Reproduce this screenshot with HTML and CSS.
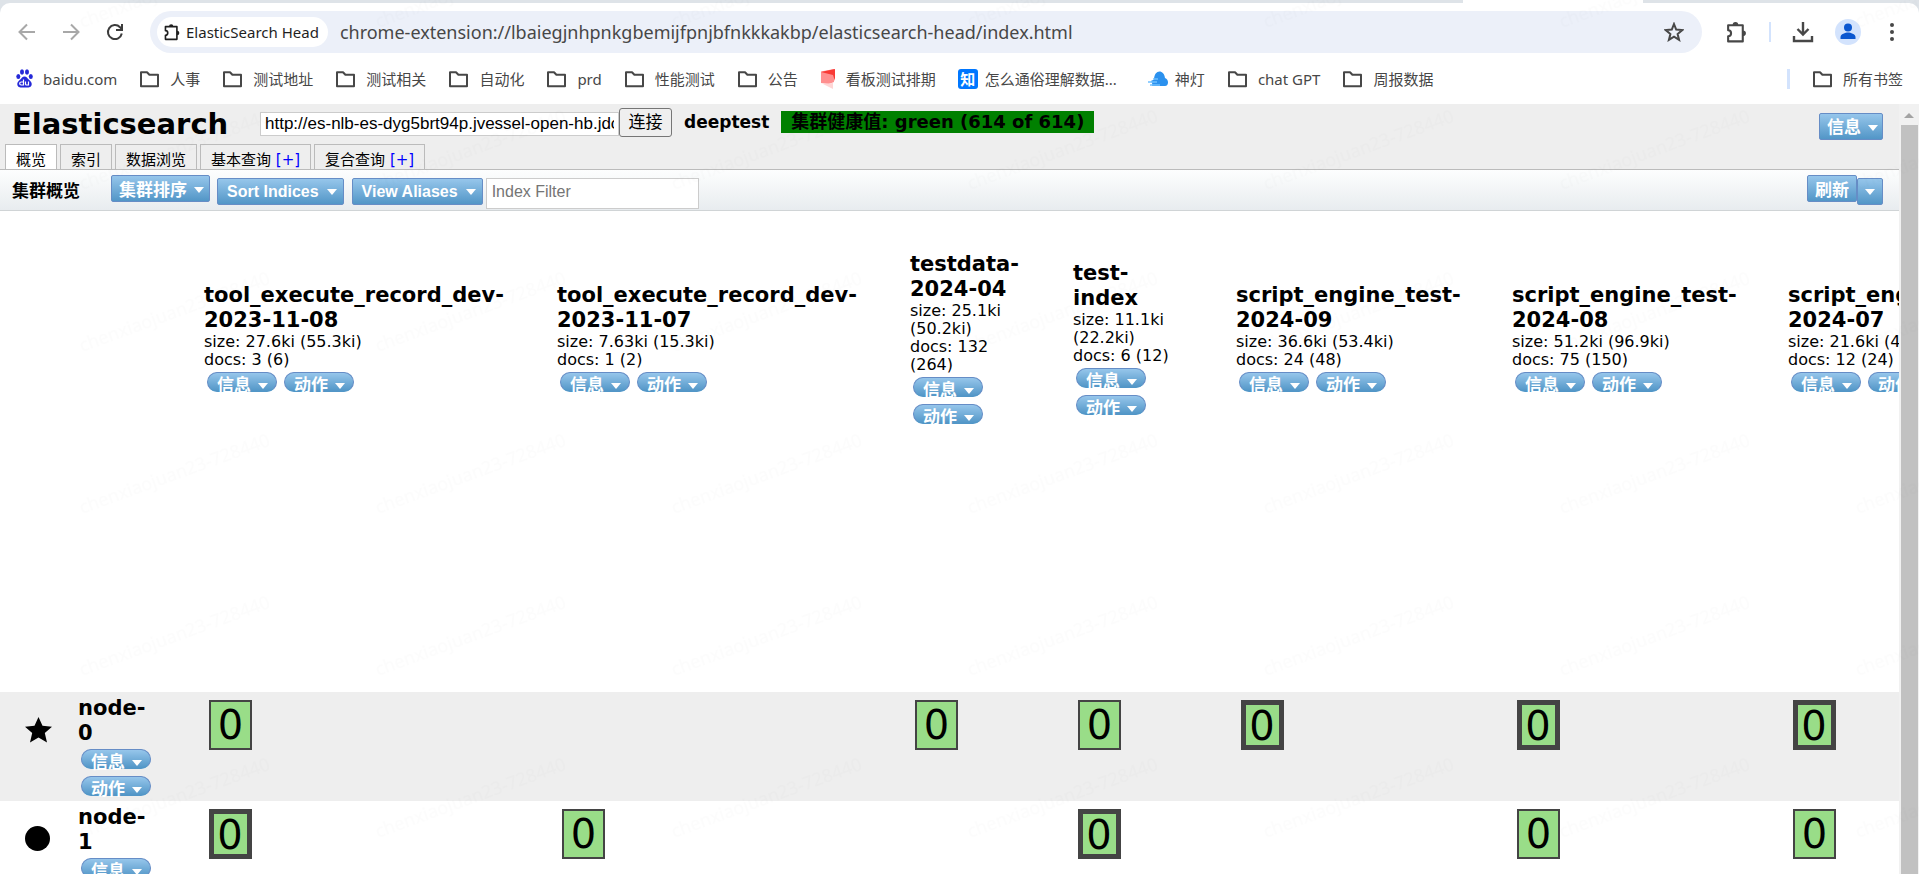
FILE: index.html
```html
<!DOCTYPE html>
<html lang="zh-CN">
<head>
    <meta charset="UTF-8">
    <meta name="viewport" content="width=device-width, initial-scale=1.0">
    <title>ElasticSearch Head</title>
    <link rel="stylesheet" href="styles.css">
</head>
<body>
    <svg class="defs" aria-hidden="true">
        <symbol id="folder" viewBox="0 0 21 18">
            <path d="M2 15.500V2.200h6l2.400 2.600H19v11.400H2z" fill="none" stroke="#474747" stroke-width="2" stroke-linejoin="round"/>
        </symbol>
        <symbol id="puzzle" viewBox="0 0 22 22">
            <path d="M3 4.500h14v15.500H3v-5a2.800 2.800 0 0 0 0-5.600z" fill="none" stroke="currentColor" stroke-width="2" stroke-linejoin="round"/>
            <path d="M7.300 4.500a2.700 3 0 0 1 5.400 0zM17 9.500a3 2.700 0 0 1 0 5.400z" fill="currentColor"/>
        </symbol>
    </svg>

    <div class="browser">
        <div class="tabstrip"><span class="active-tab"></span></div>
        <div class="toolbar">
            <button class="nav" aria-label="back">
                <svg width="18" height="18" viewBox="0 0 18 18"><path d="M17 9H2M9 1.500L1.500 9 9 16.500" fill="none" stroke="#a8a8a8" stroke-width="2"/></svg>
            </button>
            <button class="nav" aria-label="forward">
                <svg width="18" height="18" viewBox="0 0 18 18"><path d="M1 9h15M9 1.500L16.500 9 9 16.500" fill="none" stroke="#a8a8a8" stroke-width="2"/></svg>
            </button>
            <button class="nav" aria-label="reload">
                <svg width="18" height="18" viewBox="0 0 18 18"><path d="M15.800 10.500A7 7 0 1 1 14 4.200L16 6.500" fill="none" stroke="#3c3c3c" stroke-width="2"/><path d="M15 1h2v7h-7V6h5z" fill="#3c3c3c"/></svg>
            </button>
            <div class="address">
                <span class="site-chip"><svg width="18" height="20"><use href="#puzzle"/></svg>ElasticSearch Head</span>
                <span class="url">chrome-extension://lbaiegjnhpnkgbemijfpnjbfnkkkakbp/elasticsearch-head/index.html</span>
                <svg class="star" width="20" height="20" viewBox="0 0 20 20"><path d="M10 2l2.200 5.600 6 .5-4.600 3.900 1.500 5.900L10 14.700 4.900 17.900l1.500-5.900L1.800 8.100l6-.5z" fill="none" stroke="#474747" stroke-width="2"/></svg>
            </div>
            <div class="tools">
                <svg width="23" height="24" color="#474747"><use href="#puzzle"/></svg>
                <span class="divider"></span>
                <svg width="22" height="22" viewBox="0 0 22 22"><path d="M11 1v12M5.500 8l5.500 5.500L16.500 8M2 15v5h18v-5" fill="none" stroke="#474747" stroke-width="2.400"/></svg>
                <svg width="26" height="26" viewBox="0 0 26 26"><circle cx="13" cy="13" r="13" fill="#d3e3fd"/><circle cx="13" cy="8.500" r="4" fill="#0b57d0"/><path d="M5.500 20v-2c0-3 5-4.500 7.500-4.500s7.500 1.500 7.500 4.500v2z" fill="#0b57d0"/></svg>
                <svg class="more" width="6" height="22" viewBox="0 0 6 22"><circle cx="3" cy="4" r="2" fill="#474747"/><circle cx="3" cy="11" r="2" fill="#474747"/><circle cx="3" cy="18" r="2" fill="#474747"/></svg>
            </div>
        </div>
        <div class="bookmarks">
            <a class="bookmark" href="#">
                <svg width="17" height="19" viewBox="0 0 17 19"><g fill="#2529d8"><ellipse cx="2.300" cy="7.500" rx="2" ry="2.600"/><ellipse cx="6" cy="3" rx="2" ry="2.700"/><ellipse cx="11" cy="3" rx="2" ry="2.700"/><ellipse cx="14.800" cy="7.500" rx="2" ry="2.600"/><path d="M8.500 7.500c2 0 3 1.800 4.500 3.300s3 2.700 2.700 4.700c-.5 3.500-3.700 3-7.200 3s-6.700.5-7.200-3c-.3-2 1.200-3.200 2.700-4.700S6.500 7.500 8.500 7.500z"/></g><path d="M7.500 10.500v5.500H5.200a1.400 1.400 0 0 1 0-3h2.300M9.500 12.500V15q0 1 1 1h2v-3.500" fill="none" stroke="#fff" stroke-width="1.200"/></svg>
                baidu.com
            </a>
            <a class="bookmark" href="#"><svg width="21" height="18"><use href="#folder"/></svg>人事</a>
            <a class="bookmark" href="#"><svg width="21" height="18"><use href="#folder"/></svg>测试地址</a>
            <a class="bookmark" href="#"><svg width="21" height="18"><use href="#folder"/></svg>测试相关</a>
            <a class="bookmark" href="#"><svg width="21" height="18"><use href="#folder"/></svg>自动化</a>
            <a class="bookmark" href="#"><svg width="21" height="18"><use href="#folder"/></svg>prd</a>
            <a class="bookmark" href="#"><svg width="21" height="18"><use href="#folder"/></svg>性能测试</a>
            <a class="bookmark" href="#"><svg width="21" height="18"><use href="#folder"/></svg>公告</a>
            <a class="bookmark" href="#">
                <svg width="16" height="20" viewBox="0 0 16 20"><path d="M1 2.500L14 0v13L9 15 1 14z" fill="#ff8f8f"/><path d="M1 3L15 0v12l-2-6z" fill="#f93a35"/><path d="M3 15l10-1v6z" fill="#ffd5d5"/></svg>
                看板测试排期
            </a>
            <a class="bookmark site" href="#"><span class="zhihu">知</span>怎么通俗理解数据...</a>
            <a class="bookmark site cloud" href="#">
                <svg width="21" height="16" viewBox="0 0 21 16"><path d="M5 15c0-1 1-2-1-5 1-1 2-1 3-1 0-11 10-11 11-2 4 1 4 8 0 8z" fill="#2b91ee"/><path d="M1 11h9M3 14h10M6 8h5" stroke="#6fc0ff" stroke-width="1.500"/></svg>
                神灯
            </a>
            <a class="bookmark" href="#"><svg width="21" height="18"><use href="#folder"/></svg>chat GPT</a>
            <a class="bookmark" href="#"><svg width="21" height="18"><use href="#folder"/></svg>周报数据</a>
            <span class="divider all-divider"></span>
            <a class="bookmark" href="#"><svg width="21" height="18"><use href="#folder"/></svg>所有书签</a>
        </div>
    </div>

    <div class="viewport">
        <div class="app">
            <div class="header">
                <div class="connect">
                    <h1>Elasticsearch</h1>
                    <input class="host" type="text" aria-label="host" value="http://es-nlb-es-dyg5brt94p.jvessel-open-hb.jdcloud.com:9200/">
                    <button class="connect-btn">连接</button>
                    <span class="cluster-name">deeptest</span>
                    <span class="health">集群健康值: green (614 of 614)</span>
                    <button class="btn info">信息<i class="caret"></i></button>
                </div>
                <div class="tabs">
                    <div class="tab selected">概览</div>
                    <div class="tab">索引</div>
                    <div class="tab">数据浏览</div>
                    <div class="tab">基本查询 <a href="#">[+]</a></div>
                    <div class="tab">复合查询 <a href="#">[+]</a></div>
                </div>
            </div>
            <div class="actions">
                <h2>集群概览</h2>
                <button class="btn raised">集群排序<i class="caret"></i></button>
                <button class="btn">Sort Indices<i class="caret"></i></button>
                <button class="btn">View Aliases<i class="caret"></i></button>
                <input class="filter" type="text" placeholder="Index Filter" aria-label="Index Filter">
                <div class="refresh">
                    <button class="btn raised">刷新</button>
                    <button class="btn" aria-label="refresh options"><i class="caret"></i></button>
                </div>
            </div>

            <table class="cluster">
                <thead>
                    <tr>
                        <td></td>
                        <td></td>
                        <th class="wide">
                            <h3>tool_execute_record_dev-2023-11-08</h3>
                            <div>size: 27.6ki (55.3ki)</div>
                            <div>docs: 3 (6)</div>
                            <div class="menus"><button class="pill">信息<i class="caret"></i></button><button class="pill">动作<i class="caret"></i></button></div>
                        </th>
                        <th class="wide">
                            <h3>tool_execute_record_dev-2023-11-07</h3>
                            <div>size: 7.63ki (15.3ki)</div>
                            <div>docs: 1 (2)</div>
                            <div class="menus"><button class="pill">信息<i class="caret"></i></button><button class="pill">动作<i class="caret"></i></button></div>
                        </th>
                        <th class="narrow">
                            <h3>testdata-2024-04</h3>
                            <div>size: 25.1ki (50.2ki)</div>
                            <div>docs: 132 (264)</div>
                            <div class="menus"><button class="pill">信息<i class="caret"></i></button><button class="pill">动作<i class="caret"></i></button></div>
                        </th>
                        <th class="narrow">
                            <h3>test-index</h3>
                            <div>size: 11.1ki (22.2ki)</div>
                            <div>docs: 6 (12)</div>
                            <div class="menus"><button class="pill">信息<i class="caret"></i></button><button class="pill">动作<i class="caret"></i></button></div>
                        </th>
                        <th class="medium">
                            <h3>script_engine_test-2024-09</h3>
                            <div>size: 36.6ki (53.4ki)</div>
                            <div>docs: 24 (48)</div>
                            <div class="menus"><button class="pill">信息<i class="caret"></i></button><button class="pill">动作<i class="caret"></i></button></div>
                        </th>
                        <th class="medium">
                            <h3>script_engine_test-2024-08</h3>
                            <div>size: 51.2ki (96.9ki)</div>
                            <div>docs: 75 (150)</div>
                            <div class="menus"><button class="pill">信息<i class="caret"></i></button><button class="pill">动作<i class="caret"></i></button></div>
                        </th>
                        <th class="medium">
                            <h3>script_engine_test-2024-07</h3>
                            <div>size: 21.6ki (43.2ki)</div>
                            <div>docs: 12 (24)</div>
                            <div class="menus"><button class="pill">信息<i class="caret"></i></button><button class="pill">动作<i class="caret"></i></button></div>
                        </th>
                    </tr>
                </thead>
                <tbody>
                    <tr>
                        <td class="mark"><svg width="27" height="26" viewBox="0 0 27 26"><path d="M13.500 0l4 8.800 9.500.9-7.200 6.300 2.200 9.600-8.500-5-8.500 5L7.200 16 0 9.700l9.500-.9z"/></svg></td>
                        <th class="node">
                            <h3>node-0</h3>
                            <div class="menus"><button class="pill">信息<i class="caret"></i></button><button class="pill">动作<i class="caret"></i></button></div>
                        </th>
                        <td><div class="shard">0</div></td>
                        <td></td>
                        <td><div class="shard">0</div></td>
                        <td><div class="shard">0</div></td>
                        <td><div class="shard primary">0</div></td>
                        <td><div class="shard primary">0</div></td>
                        <td><div class="shard primary">0</div></td>
                    </tr>
                    <tr>
                        <td class="mark"><svg width="25" height="25" viewBox="0 0 25 25"><circle cx="12.500" cy="12.500" r="12.500"/></svg></td>
                        <th class="node">
                            <h3>node-1</h3>
                            <div class="menus"><button class="pill">信息<i class="caret"></i></button><button class="pill">动作<i class="caret"></i></button></div>
                        </th>
                        <td><div class="shard primary">0</div></td>
                        <td><div class="shard">0</div></td>
                        <td></td>
                        <td><div class="shard primary">0</div></td>
                        <td></td>
                        <td><div class="shard">0</div></td>
                        <td><div class="shard">0</div></td>
                    </tr>
                </tbody>
            </table>
        </div>
        <div class="scrollbar"><span class="arrow-up"></span><span class="thumb"></span></div>
    </div>

    <svg class="watermark" aria-hidden="true">
        <defs>
            <pattern id="wm" x="68" y="-80" width="296" height="162" patternUnits="userSpaceOnUse">
                <text x="14" y="108" transform="rotate(-20 14 108)">chenxiaojuan23-728440</text>
            </pattern>
        </defs>
        <rect width="100%" height="100%" fill="url(#wm)"/>
    </svg>
</body>
</html>
```
FILE: styles.css
```css
* {
    box-sizing: border-box;
}
body {
    margin: 0;
    height: 100vh;
    display: flex;
    flex-direction: column;
    overflow: hidden;
    background: #fff;
    color: #000;
    font-family: "DejaVu Sans", "Noto Sans CJK SC", sans-serif;
    font-size: 15px;
}
h1, h2, h3 {
    margin: 0;
}
button, input {
    font-family: "Liberation Sans", "Noto Sans CJK SC", sans-serif;
}
a {
    text-decoration: none;
}
svg {
    flex: none;
}
.defs {
    display: none;
}

/* browser chrome */
.browser {
    font-family: "Noto Sans", "Noto Sans CJK SC", sans-serif;
    color: #474747;
    background: #dee3e8;
    flex: none;
}
.tabstrip {
    height: 3px;
    display: flex;
    justify-content: flex-end;
    padding-right: 276px;
}
.active-tab {
    width: 180px;
    background: #fff;
}
.toolbar {
    display: flex;
    align-items: center;
    height: 58px;
    padding: 0 24px 0 18px;
    background: #fff;
    border-radius: 10px 10px 0 0;
}
.nav {
    display: flex;
    border: none;
    background: none;
    padding: 0;
    margin-right: 26px;
}
.address {
    flex: 1;
    display: flex;
    align-items: center;
    height: 42px;
    padding: 0 18px 0 7px;
    background: #ecf0f9;
    border-radius: 21px;
}
.site-chip {
    display: flex;
    align-items: center;
    gap: 5px;
    height: 30px;
    padding: 0 9px 0 6px;
    border-radius: 15px;
    background: #fff;
    color: #1f1f1f;
    font-size: 15px;
    white-space: nowrap;
}
.url {
    flex: 1;
    margin-left: 12px;
    font-size: 18px;
    white-space: nowrap;
}
.tools {
    display: flex;
    align-items: center;
    gap: 21px;
    margin-left: 23px;
}
.more {
    margin-left: 7px;
}
.divider {
    width: 2px;
    height: 20px;
    background: #d3e3fd;
}
.bookmarks {
    display: flex;
    align-items: center;
    gap: 22px;
    height: 43px;
    padding: 0 16px 8px;
    background: #fff;
    white-space: nowrap;
}
.bookmark {
    display: flex;
    align-items: center;
    gap: 10px;
    color: #474747;
    line-height: 20px;
}
.site {
    gap: 7px;
}
.cloud {
    margin-left: 8px;
}
.zhihu {
    width: 20px;
    height: 20px;
    border-radius: 3px;
    background: #0077ff;
    color: #fff;
    text-align: center;
    font-weight: bold;
}
.all-divider {
    width: 3px;
    margin-left: auto;
}

/* page */
.viewport {
    flex: 1;
    display: flex;
    min-height: 0;
}
.app {
    flex: 1;
    min-width: 0;
    overflow: hidden;
}
.header {
    height: 66px;
    background: #eee;
    border-bottom: 1px solid #bbb;
}
.connect {
    display: flex;
    align-items: center;
    height: 40px;
    padding: 0 16px 0 12px;
}
.connect h1 {
    width: 248px;
    font-size: 29px;
    line-height: 40px;
}
.host {
    width: 359px;
    height: 24px;
    padding: 1px 4px;
    border: 1px solid #ccc;
    font-size: 17px;
}
.connect-btn {
    width: 53px;
    height: 29px;
    padding: 0;
    border: 1px solid #767676;
    border-radius: 3px;
    background: #efefef;
    font-size: 17px;
    line-height: 27px;
    margin-bottom: 4px;
}
.cluster-name {
    margin: 0 12px 4px 12px;
    font-size: 17px;
    font-weight: bold;
}
.health {
    height: 22px;
    padding: 0 10px;
    margin-bottom: 4px;
    background: green;
    font-size: 18px;
    font-weight: bold;
    line-height: 22px;
    white-space: nowrap;
}
.tabs {
    display: flex;
    gap: 3px;
    padding-left: 5px;
}
.tab {
    height: 25px;
    padding: 3px 10px 0;
    border: 1px solid #bbb;
    border-bottom: none;
    line-height: 24px;
    white-space: nowrap;
}
.tab.selected {
    background: #fff;
}
.tab a {
    color: #00f;
}
.actions {
    display: flex;
    align-items: flex-start;
    height: 41px;
    padding: 8px 16px 0 12px;
    background: linear-gradient(#fdfefe, #e8ecef);
    border-bottom: 1px solid #d0d4d6;
}
.actions h2 {
    width: 99px;
    margin-top: -3px;
    font-size: 17px;
    line-height: 32px;
}
.btn {
    display: flex;
    align-items: center;
    gap: 8px;
    height: 27px;
    margin-right: 8px;
    padding: 0 6px 0 9px;
    border: 1px solid #668dc6;
    border-radius: 2px;
    background: linear-gradient(#96c6eb, #5296c7);
    color: #fff;
    font-size: 16px;
    font-weight: bold;
    line-height: 25px;
    white-space: nowrap;
}
.actions .raised {
    gap: 7px;
    margin-top: -3px;
    margin-right: 7px;
    padding: 3px 5px 0 7px;
    font-size: 17px;
}
.btn.info {
    gap: 7px;
    margin: 4px 0 0 auto;
    padding: 3px 4px 0 7px;
    font-size: 17px;
}
.caret {
    border: 5px solid transparent;
    border-top: 6px solid #fff;
    border-bottom: none;
}
.filter {
    width: 213px;
    height: 31px;
    margin-left: -5px;
    padding: 1px 5px 5px;
    border: 1px solid #ccc;
    background: #fff;
    font-size: 16px;
}
.filter::placeholder {
    color: #757575;
}
.refresh {
    display: flex;
    align-items: flex-start;
    margin-left: auto;
}
.refresh .btn {
    margin-right: 0;
    padding-left: 7px;
    padding-right: 7px;
}

/* cluster grid */
.cluster {
    border-collapse: collapse;
}
.cluster td, .cluster th {
    padding: 0;
    text-align: left;
    vertical-align: top;
    font-size: 16px;
    font-weight: normal;
    line-height: 18px;
}
.cluster thead th {
    height: 481px;
    padding-bottom: 224px;
    vertical-align: middle;
}
.cluster th.wide {
    min-width: 353px;
    padding-right: 40px;
}
.cluster th.narrow {
    min-width: 163px;
    padding-right: 50px;
}
.cluster th.medium {
    min-width: 276px;
    padding-right: 40px;
}
.cluster h3 {
    font-size: 21px;
    line-height: 25px;
}
.cluster tbody tr {
    height: 109px;
}
.cluster tbody tr:nth-child(odd) {
    background: #eee;
}
.cluster td.mark {
    min-width: 78px;
    padding: 25px 0 0 25px;
}
.cluster td.mark svg {
    display: block;
}
.cluster th.node {
    min-width: 126px;
    padding: 4px 50px 1px 0;
}
.menus {
    display: flex;
    flex-wrap: wrap;
    gap: 7px;
    padding: 3px 0 4px 3px;
}
/* label hangs low and runs over the bottom edge of the pill */
.pill {
    display: flex;
    align-items: flex-start;
    gap: 7px;
    width: 70px;
    height: 20px;
    padding: 0 0 0 9px;
    border: 1px solid #668dc6;
    border-bottom-color: #5296c7;
    border-radius: 10px;
    background: linear-gradient(#96c6eb, #5296c7);
    color: #fff;
    font-size: 17px;
    font-weight: bold;
    line-height: 26px;
}
.pill .caret {
    margin-top: 10px;
}
.shard {
    width: 43px;
    height: 50px;
    margin: 8px 0 0 5px;
    border: 2px solid #444;
    background: #9d8;
    font-size: 40px;
    line-height: 46px;
    text-align: center;
}
.shard.primary {
    border-width: 5px;
    line-height: 42px;
    padding-right: 1px;
}

.scrollbar {
    width: 20px;
    display: flex;
    flex-direction: column;
    align-items: center;
    background: #f1f1f1;
}
.arrow-up {
    margin: 9px 0 7px;
    border: 5px solid transparent;
    border-top: none;
    border-bottom: 5px solid #a3a3a3;
}
.thumb {
    flex: 1;
    width: 17px;
    background: #c1c1c1;
}
.watermark {
    position: absolute;
    top: 0;
    left: 0;
    width: 100%;
    height: 100%;
    pointer-events: none;
}
.watermark text {
    font-family: "Noto Sans", sans-serif;
    font-size: 18px;
    fill: #000;
    fill-opacity: 0.01;
}
```
